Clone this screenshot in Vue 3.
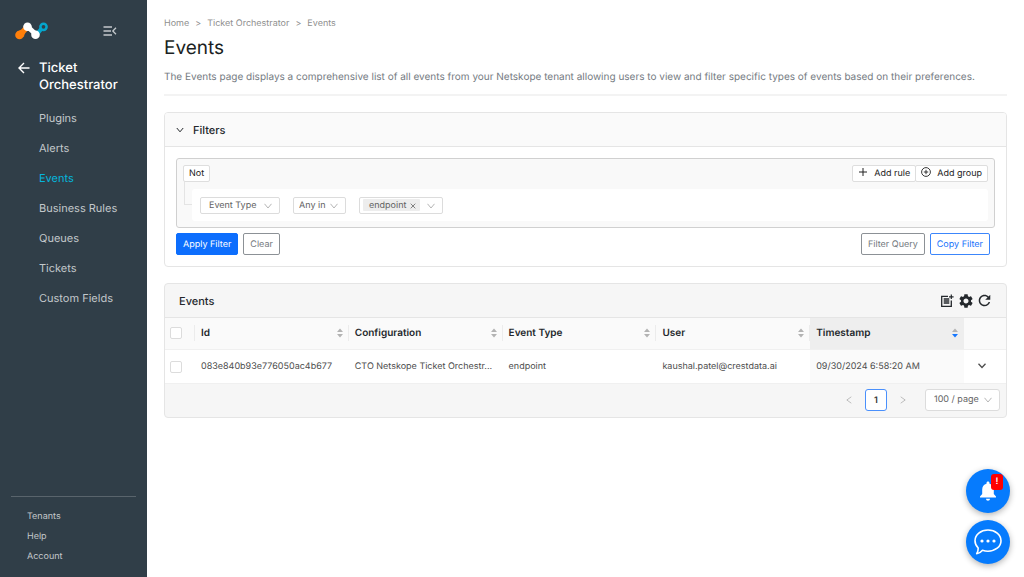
<template>
  <div class="layout">
    <aside class="sidebar">
      <div class="brand">
        <svg class="logo" viewBox="0 0 34 18" width="34" height="18" aria-label="Netskope" role="img">
          <path d="M2 9.500 Q7 8 9 4 L14 8 Q9 11 9 15 Z" fill="#ff7f0a" />
          <circle cx="4.500" cy="13" r="4.300" fill="#ff7f0a" />
          <path d="M21 13 Q24 10 27 6" stroke="#05a5cc" stroke-width="4" fill="none" />
          <circle cx="28.500" cy="4.800" r="3.100" fill="#303e48" stroke="#05a5cc" stroke-width="2.500" />
          <path d="M13 5 L21 12.500" stroke="#fff" stroke-width="5" />
          <circle cx="12.500" cy="4.800" r="4.300" fill="#fff" />
          <circle cx="20.500" cy="12.800" r="4.300" fill="#fff" />
        </svg>
        <button type="button" class="icon-btn collapse" aria-label="Collapse menu">
          <svg viewBox="0 0 14 10" width="14" height="10">
            <path d="M0.500 1 H9 M0.500 5 H8 M0.500 9 H9 M13 1.700 L9.800 5 L13 8.300" fill="none" stroke="currentColor" stroke-width="1.300" />
          </svg>
        </button>
      </div>

      <div class="module">
        <a href="#" class="back" aria-label="Back">
          <svg viewBox="0 0 12 12" width="12" height="12">
            <path d="M11.500 6 H1 M6 1 L1 6 L6 11" fill="none" stroke="currentColor" stroke-width="1.400" />
          </svg>
        </a>
        <div class="module-name">Ticket Orchestrator</div>
      </div>

      <nav class="nav">
        <a v-for="item in menu" :key="item" href="#" :class="{ active: item === current }" @click.prevent="current = item">{{ item }}</a>
      </nav>

      <div class="footer-nav">
        <a v-for="item in footerMenu" :key="item" href="#">{{ item }}</a>
      </div>
    </aside>

    <main class="content">
      <div class="breadcrumb">
        <a href="#">Home</a>
        <span>&gt;</span>
        <a href="#">Ticket Orchestrator</a>
        <span>&gt;</span>
        <a href="#">Events</a>
      </div>
      <h1>Events</h1>
      <p class="description">
        The Events page displays a comprehensive list of all events from your Netskope tenant allowing users to view and filter specific types of events based on their preferences.
      </p>

      <!-- Filters -->
      <section class="card filters">
        <button type="button" class="card-header toggle" :aria-expanded="open" @click="open = !open">
          <svg viewBox="0 0 8 6" width="8" height="6">
            <path d="M0.800 1 L4 4.800 L7.200 1" fill="none" stroke="currentColor" />
          </svg>
          Filters
        </button>
        <div v-if="open" class="filter-body">
          <div class="group">
            <div class="group-top">
              <button type="button" class="small-btn">Not</button>
              <div class="group-actions">
                <button type="button" class="small-btn">
                  <svg viewBox="0 0 10 14" width="10" height="14">
                    <path d="M1 5 H9 M5 1 V9" stroke="currentColor" />
                  </svg>
                  Add rule
                </button>
                <button type="button" class="small-btn">
                  <svg viewBox="0 0 10 14" width="10" height="14">
                    <circle cx="5" cy="5" r="4.400" fill="none" stroke="currentColor" stroke-width="0.900" />
                    <path d="M2.800 5 H7.200 M5 2.800 V7.200" stroke="currentColor" stroke-width="0.900" />
                  </svg>
                  Add group
                </button>
              </div>
            </div>
            <div class="rules">
              <div class="branch"></div>
              <div class="rule">
                <div class="select field">
                  <select v-model="field" aria-label="Field">
                    <option>Event Type</option>
                  </select>
                  <svg class="caret" viewBox="0 0 8 6" width="8" height="6"><path d="M0.500 0.800 L4 5 L7.500 0.800" /></svg>
                </div>
                <div class="select operator">
                  <select v-model="operator" aria-label="Operator">
                    <option>Any in</option>
                  </select>
                  <svg class="caret" viewBox="0 0 8 6" width="8" height="6"><path d="M0.500 0.800 L4 5 L7.500 0.800" /></svg>
                </div>
                <div class="select values">
                  <span v-for="v in values" :key="v" class="tag">
                    {{ v }}
                    <button type="button" class="icon-btn" :aria-label="'Remove ' + v" @click="removeValue(v)">
                      <svg viewBox="0 0 6 6" width="6" height="6">
                        <path d="M0.700 0.700 L5.300 5.300 M5.300 0.700 L0.700 5.300" stroke="currentColor" stroke-width="0.800" />
                      </svg>
                    </button>
                  </span>
                  <div class="picker">
                    <select aria-label="Values">
                      <option></option>
                    </select>
                    <svg class="caret" viewBox="0 0 8 6" width="8" height="6"><path d="M0.500 0.800 L4 5 L7.500 0.800" /></svg>
                  </div>
                </div>
              </div>
            </div>
          </div>
          <div class="buttons">
            <button type="button" class="btn primary">Apply Filter</button>
            <button type="button" class="btn">Clear</button>
            <button type="button" class="btn push">Filter Query</button>
            <button type="button" class="btn outline">Copy Filter</button>
          </div>
        </div>
      </section>

      <!-- Events table -->
      <section class="card events">
        <div class="card-header table-title">
          <h2>Events</h2>
          <div class="tools">
            <button type="button" class="icon-btn" aria-label="Add to list">
              <svg viewBox="0 0 14 14" width="14" height="14">
                <path d="M8 2.300 H1.700 V12.300 H11.300 V6.500" fill="none" stroke="currentColor" stroke-width="1.300" />
                <path d="M3.700 5 H9.300 M3.700 7 H9.300 M3.700 9 H9.300" stroke="currentColor" stroke-width="1.300" />
                <path d="M11.300 0.500 V5 M9 2.800 H13.600" stroke="currentColor" stroke-width="1.200" />
              </svg>
            </button>
            <button type="button" class="icon-btn" aria-label="Settings">
              <svg viewBox="2 2 20 20" width="14" height="14">
                <path fill="currentColor" d="M19.140 12.940c.04-.3.06-.61.06-.94 0-.32-.02-.64-.07-.94l2.030-1.580c.18-.14.23-.41.12-.61l-1.920-3.320c-.12-.22-.37-.29-.59-.22l-2.390.96c-.5-.38-1.030-.7-1.620-.94l-.36-2.540c-.04-.24-.24-.41-.48-.41h-3.840c-.24 0-.43.17-.47.41l-.36 2.540c-.59.24-1.130.57-1.620.94l-2.390-.96c-.22-.08-.47 0-.59.22L2.740 8.870c-.12.21-.08.47.12.61l2.030 1.580c-.05.3-.09.63-.09.94s.02.64.07.94l-2.030 1.580c-.18.14-.23.41-.12.61l1.920 3.320c.12.22.37.29.59.22l2.390-.96c.5.38 1.030.7 1.620.94l.36 2.540c.05.24.24.41.48.41h3.840c.24 0 .44-.17.47-.41l.36-2.540c.59-.24 1.130-.56 1.620-.94l2.390.96c.22.08.47 0 .59-.22l1.920-3.320c.12-.22.07-.47-.12-.61l-2.010-1.580zM12 15.600c-1.980 0-3.600-1.620-3.600-3.600s1.620-3.600 3.600-3.600 3.600 1.620 3.600 3.600-1.620 3.600-3.600 3.600z" />
              </svg>
            </button>
            <button type="button" class="icon-btn" aria-label="Refresh">
              <svg viewBox="3 3 18 18" width="13" height="13">
                <path fill="currentColor" d="M17.650 6.350C16.200 4.900 14.210 4 12 4c-4.420 0-7.990 3.580-7.990 8s3.570 8 7.990 8c3.730 0 6.840-2.550 7.730-6h-2.080c-.82 2.330-3.040 4-5.650 4-3.310 0-6-2.690-6-6s2.690-6 6-6c1.660 0 3.140.69 4.220 1.780L13 11h7V4l-2.350 2.350z" />
              </svg>
            </button>
          </div>
        </div>

        <table>
          <colgroup>
            <col class="col-check">
            <col v-for="c in columns" :key="c.key">
            <col class="col-expand">
          </colgroup>
          <thead>
            <tr>
              <th><input type="checkbox" aria-label="Select all"></th>
              <th v-for="c in columns" :key="c.key" :class="{ sorted: c.key === sortKey }">
                <button type="button" class="sorter" @click="sortKey = c.key">
                  {{ c.title }}
                  <svg viewBox="0 0 6 10" width="6" height="10">
                    <path d="M0 4 L3 0.500 L6 4 Z" />
                    <path class="down" d="M0 6 L3 9.500 L6 6 Z" />
                  </svg>
                </button>
              </th>
              <th></th>
            </tr>
          </thead>
          <tbody>
            <tr v-for="row in rows" :key="row.id">
              <td><input type="checkbox" :aria-label="'Select ' + row.id"></td>
              <td v-for="c in columns" :key="c.key" :class="{ sorted: c.key === sortKey }">{{ row[c.key] }}</td>
              <td class="expand">
                <button type="button" class="icon-btn" aria-label="Expand row">
                  <svg viewBox="0 0 8 6" width="8" height="6">
                    <path d="M0.500 0.800 L4 4.500 L7.500 0.800" fill="none" stroke="currentColor" stroke-width="1.300" />
                  </svg>
                </button>
              </td>
            </tr>
          </tbody>
        </table>

        <div class="pagination">
          <button type="button" class="page-arrow" aria-label="Previous page" disabled>
            <svg viewBox="0 0 6 8" width="6" height="8"><path d="M5.300 0.800 L0.800 4 L5.300 7.200" /></svg>
          </button>
          <button type="button" class="page">1</button>
          <button type="button" class="page-arrow" aria-label="Next page" disabled>
            <svg viewBox="0 0 6 8" width="6" height="8"><path d="M0.700 0.800 L5.200 4 L0.700 7.200" /></svg>
          </button>
          <div class="select page-size">
            <select v-model="pageSize" aria-label="Page size">
              <option>100 / page</option>
            </select>
            <svg class="caret" viewBox="0 0 8 6" width="8" height="6"><path d="M0.500 0.800 L4 5 L7.500 0.800" /></svg>
          </div>
        </div>
      </section>
    </main>

    <div class="floating">
      <button type="button" class="fab" aria-label="Notifications">
        <svg viewBox="0 0 16 20" width="16" height="20">
          <path fill="#fff" d="M8 0.500 C8.900 0.500 9.500 1.100 9.500 2 V2.800 C12.200 3.500 13.800 5.800 13.800 8.500 V13 L16 15.500 V16.500 H0 V15.500 L2.200 13 V8.500 C2.200 5.800 3.800 3.500 6.500 2.800 V2 C6.500 1.100 7.100 0.500 8 0.500 Z M6 17.800 H10 C10 19 9.100 19.800 8 19.800 C6.900 19.800 6 19 6 17.800 Z" />
        </svg>
        <span class="badge">!</span>
      </button>
      <button type="button" class="fab" aria-label="Chat">
        <svg viewBox="0 0 28 26" width="28" height="26">
          <path d="M14 1 C21.200 1 27 5.600 27 11.700 C27 17.800 21.200 22.200 14 22.200 C12 22.200 10.200 21.900 8.500 21.300 C7 23.300 5 24.400 2.700 24.700 C3.800 23 4.300 21.300 4.200 19 C2.200 17 1 14.500 1 11.700 C1 5.600 6.800 1 14 1 Z" fill="none" stroke="#fff" stroke-width="1.600" stroke-linejoin="round" />
          <circle cx="8" cy="12" r="1.600" fill="#fff" />
          <circle cx="14" cy="12" r="1.600" fill="#fff" />
          <circle cx="20" cy="12" r="1.600" fill="#fff" />
        </svg>
      </button>
    </div>
  </div>
</template>

<script setup>
import { ref } from 'vue';

const menu = ['Plugins', 'Alerts', 'Events', 'Business Rules', 'Queues', 'Tickets', 'Custom Fields'];
const footerMenu = ['Tenants', 'Help', 'Account'];
const current = ref('Events');

// Filters
const open = ref(true);
const field = ref('Event Type');
const operator = ref('Any in');
const values = ref(['endpoint']);

const removeValue = (value) => {
  values.value = values.value.filter((v) => v !== value);
};

// Table
const columns = [
  { key: 'id', title: 'Id' },
  { key: 'configuration', title: 'Configuration' },
  { key: 'type', title: 'Event Type' },
  { key: 'user', title: 'User' },
  { key: 'timestamp', title: 'Timestamp' }
];
const rows = ref([
  {
    id: '083e840b93e776050ac4b677',
    configuration: 'CTO Netskope Ticket Orchestr...',
    type: 'endpoint',
    user: 'kaushal.patel@crestdata.ai',
    timestamp: '09/30/2024 6:58:20 AM'
  }
]);
const sortKey = ref('timestamp');
const pageSize = ref('100 / page');
</script>

<style>
body {
  margin: 0;
  background: #fff;
}
</style>

<style scoped>
.layout {
  display: flex;
  min-height: 100vh;
  font-family: Inter, "Liberation Sans", sans-serif;
  font-size: 9px;
  line-height: 16px;
  color: #4d4d4d;
  text-rendering: geometricPrecision;
}

* {
  box-sizing: border-box;
}

a {
  color: inherit;
  text-decoration: none;
}

button,
select {
  font: inherit;
  color: inherit;
  text-rendering: inherit;
  cursor: pointer;
}

svg {
  display: block;
  flex: none;
}

.icon-btn {
  padding: 0;
  border: none;
  background: none;
}

/* Sidebar */
.sidebar {
  display: flex;
  flex-direction: column;
  flex: none;
  width: 147px;
  padding: 22px 11px 12px;
  background: #303e48;
  color: #c3c8cb;
}

.brand {
  display: flex;
  align-items: center;
  justify-content: space-between;
  padding: 0 19px 0 4px;
}

.collapse {
  color: #c3c8cb;
}

.module {
  display: flex;
  gap: 9px;
  margin-top: 20px;
  padding-left: 7px;
  color: #fff;
}

.back {
  padding-top: 2px;
}

.module-name {
  font-size: 13px;
  font-weight: 500;
  line-height: 17px;
}

.nav {
  display: flex;
  flex-direction: column;
  gap: 14px;
  margin-top: 16px;
  padding-left: 28px;
  font-size: 11px;
}

.nav .active {
  color: #05b5dc;
}

.footer-nav {
  display: flex;
  flex-direction: column;
  gap: 4px;
  margin-top: auto;
  padding: 12px 0 0 16px;
  border-top: 1px solid #59646c;
}

/* Page */
.content {
  flex: 1;
  min-width: 0;
  padding: 16px 17px;
}

.breadcrumb {
  display: flex;
  gap: 6px;
  color: #8f8f8f;
}

h1 {
  margin: 5px 0 0;
  font-size: 19px;
  font-weight: 400;
  line-height: 22px;
  color: #1b1f23;
}

.description {
  margin: 0 0 16px;
  padding: 10px 0 9px;
  border-bottom: 2px solid #f3f3f3;
  font-size: 10px;
  color: #757b82;
}

.card {
  margin-bottom: 16px;
  border: 1px solid #e5e5e5;
  border-radius: 4px;
  overflow: hidden;
}

.card-header {
  display: flex;
  align-items: center;
  width: 100%;
  height: 34px;
  font-size: 11px;
  font-weight: 500;
  color: #24282c;
}

.toggle {
  gap: 9px;
  padding: 0 11px;
  border: none;
  border-bottom: 1px solid #e5e5e5;
  background: #fafafa;
}

.filter-body {
  padding: 11px;
}

.group {
  padding: 6px;
  border: 1px solid #d0d0d0;
  border-radius: 3px;
  background: #f9f9f9;
}

.group-top {
  display: flex;
  justify-content: space-between;
}

.group-actions {
  display: flex;
}

.small-btn {
  display: flex;
  align-items: center;
  gap: 6px;
  height: 17px;
  padding: 1px 5px 0;
  border: 1px solid #dedede;
  border-radius: 2px;
  background: #fff;
  color: #222;
}

.group-actions .small-btn + .small-btn {
  margin-left: -1px;
}

.rules {
  display: flex;
}

.branch {
  width: 8px;
  height: 23px;
  margin-left: 1px;
  border-left: 1px solid #e4e4e4;
  border-bottom: 1px solid #e4e4e4;
}

.rule {
  display: flex;
  flex: 1;
  align-items: center;
  gap: 13px;
  height: 32px;
  margin-top: 7px;
  padding: 0 8px;
  border-radius: 3px;
  background: #fff;
}

.select {
  display: grid;
  align-items: center;
  height: 17px;
  border: 1px solid #dcdcdc;
  border-radius: 2px;
  background: #fff;
  color: #636363;
}

.select > select,
.select > .caret,
.picker > * {
  grid-area: 1 / 1;
}

.select select {
  width: 100%;
  height: 100%;
  padding: 0 16px 0 8px;
  border: none;
  background: none;
  appearance: none;
}

.caret {
  justify-self: end;
  margin-right: 7px;
  fill: none;
  stroke: #b5b5b5;
  pointer-events: none;
}

.field {
  width: 80px;
}

.operator {
  width: 53px;
}

.operator select {
  padding-left: 5px;
}

.values {
  display: flex;
  width: 84px;
  padding-left: 3px;
}

.tag {
  display: flex;
  align-items: center;
  gap: 4px;
  height: 12px;
  padding: 1px 4px 0 6px;
  border-radius: 1px;
  background: #ededed;
}

.picker {
  display: grid;
  flex: 1;
  align-items: center;
  height: 100%;
}

.picker select {
  padding: 0;
}

.buttons {
  display: flex;
  gap: 5px;
  margin-top: 5px;
  padding-right: 5px;
}

.btn {
  height: 22px;
  padding: 1px 6px 0;
  border: 1px solid #8c9196;
  border-radius: 2px;
  background: #fff;
  color: #757a80;
}

.primary {
  border-color: #0d6efd;
  background: #0d6efd;
  color: #fff;
}

.outline {
  border-color: #3c86fb;
  color: #1a73fb;
}

.push {
  margin-left: auto;
}

/* Events */
.events {
  background: #f6f6f6;
}

.table-title {
  justify-content: space-between;
  padding: 0 15px 0 14px;
  border-bottom: 1px solid #e5e5e5;
}

h2 {
  margin: 0;
  font-size: 11px;
  font-weight: 500;
}

.tools {
  display: flex;
  align-items: center;
  gap: 5px;
  color: #24282c;
}

table {
  width: 100%;
  border-collapse: collapse;
  table-layout: fixed;
}

.col-check {
  width: 30px;
}

.col-expand {
  width: 42px;
}

th {
  height: 31px;
  padding: 0 6px;
  border-bottom: 1px solid #f0f0f0;
  background: linear-gradient(#ececec, #ececec) right center / 1px 16px no-repeat #fafafa;
  font-size: 10px;
  color: #24282c;
}

th.sorted {
  background: #eee;
}

th:last-child {
  background: #fafafa;
}

td {
  height: 34px;
  padding: 1px 6px 0;
  border-bottom: 1px solid #f0f0f0;
  background: #fff;
  overflow: hidden;
  text-overflow: ellipsis;
  white-space: nowrap;
}

td.sorted {
  background: #fafafa;
}

.sorter {
  display: flex;
  align-items: center;
  justify-content: space-between;
  width: 100%;
  padding: 0;
  border: none;
  background: none;
  font-weight: 600;
}

.sorter path {
  fill: #b3b3b3;
}

.sorted .sorter .down {
  fill: #1677ff;
}

input[type="checkbox"] {
  display: block;
  width: 12px;
  height: 12px;
  margin: 0 0 0 -1px;
  border: 1px solid #dcdcdc;
  border-radius: 2px;
  background: #fff;
  appearance: none;
}

input[type="checkbox"]:checked {
  background: #1677ff;
}

td.expand {
  padding: 0 10px;
}

.expand .icon-btn {
  display: block;
  padding: 4px;
}

.pagination {
  display: flex;
  align-items: center;
  justify-content: flex-end;
  gap: 5px;
  height: 33px;
  padding: 0 6px;
}

.page,
.page-arrow {
  display: flex;
  align-items: center;
  justify-content: center;
  width: 22px;
  height: 22px;
  padding: 0;
  border: none;
  background: none;
}

.page {
  padding-top: 1px;
  border: 1px solid #4a90fc;
  border-radius: 3px;
  background: #fff;
  color: #333;
  font-weight: 600;
}

.page-arrow path {
  fill: none;
  stroke: #bdbdbd;
}

.page-size {
  width: 75px;
  height: 22px;
  margin-left: 6px;
  border-radius: 3px;
}

/* Floating buttons */
.floating {
  position: fixed;
  right: 14px;
  bottom: 13px;
  display: flex;
  flex-direction: column;
  gap: 7px;
}

.fab {
  position: relative;
  display: flex;
  align-items: center;
  justify-content: center;
  width: 44px;
  height: 44px;
  padding: 0;
  border: none;
  border-radius: 50%;
  background: #067bfd;
  box-shadow: 0 2px 6px rgba(0, 0, 0, 0.3);
}

.badge {
  position: absolute;
  top: 5px;
  right: 7px;
  width: 12px;
  height: 16px;
  border-radius: 3px;
  background: #f00;
  color: #fff;
  font-weight: 600;
}
</style>
